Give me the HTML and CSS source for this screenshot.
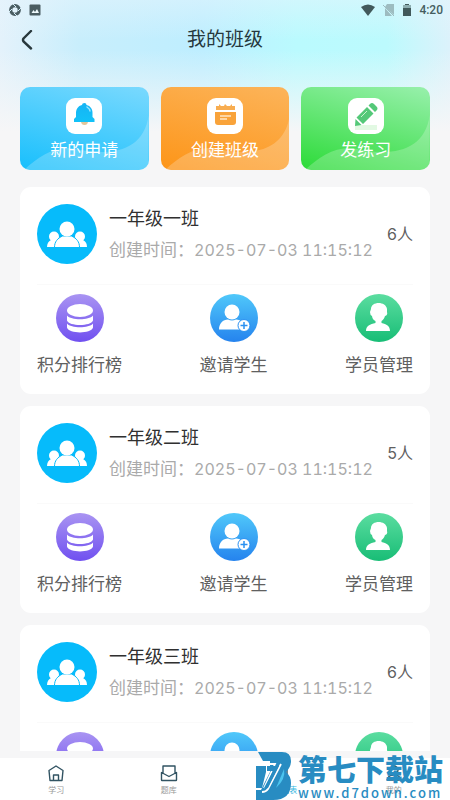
FILE: index.html
```html
<!DOCTYPE html>
<html lang="zh-CN">
<head>
<meta charset="utf-8">
<meta name="viewport" content="width=device-width, initial-scale=1">
<title>我的班级</title>
<link rel="stylesheet" href="styles.css">
</head>
<body>
<svg class="defs" aria-hidden="true">
  <defs>
    <linearGradient id="purple" x2="0" y2="1"><stop stop-color="#a994f2"/><stop offset="1" stop-color="#7050f0"/></linearGradient>
    <linearGradient id="blue" x2="0" y2="1"><stop stop-color="#50c8fa"/><stop offset="1" stop-color="#2583ee"/></linearGradient>
    <linearGradient id="green" x2="0" y2="1"><stop stop-color="#5bdda0"/><stop offset="1" stop-color="#18bd76"/></linearGradient>
    <linearGradient id="bell" x2="0" y2="1"><stop stop-color="#16b4f4"/><stop offset="1" stop-color="#12c2f8"/></linearGradient>
    <symbol id="people" viewBox="0 0 60 60">
      <circle cx="30" cy="30" r="30" fill="#06bbfb"/>
      <g fill="#fff">
        <circle cx="17" cy="32.500" r="5"/><path d="M10 43q0-5 4-7h6l2 7z"/>
        <circle cx="43" cy="32.500" r="5"/><path d="M50 43q0-5-4-7h-6l-2 7z"/>
        <path d="M17.500 43.500c0-6 3-9 8-11.500h9c5 2.500 8 5.500 8 11.500z" stroke="#06bbfb"/>
        <circle cx="30" cy="25" r="7.500"/>
        <path d="M18 42.500h24v.5H18z"/>
      </g>
      <path d="M8 43.200h44v2H8z" fill="#06bbfb"/>
    </symbol>
    <symbol id="rank" viewBox="0 0 48 48">
      <circle cx="24" cy="24" r="24" fill="url(#purple)"/>
      <g fill="#fff"><ellipse cx="24" cy="16.500" rx="13" ry="6.500"/><path d="M11 21.500c4 5 22 5 26 0v5c-2 6-24 6-26 0zM11 29.500c4 5 22 5 26 0v4c-2 6.500-24 6.500-26 0z"/></g>
    </symbol>
    <symbol id="invite" viewBox="0 0 48 48">
      <circle cx="24" cy="24" r="24" fill="url(#blue)"/>
      <circle cx="22" cy="18" r="7.500" fill="#fff"/><path d="M9 35.500c0-6 4-10 9-10q4 2 8 0c5 0 9 4 9 10z" fill="#fff"/>
      <circle cx="34" cy="31.500" r="6" fill="#fff" stroke="#2b91f1"/><path d="M30.500 31.500h7M34 28v7" stroke="#2b91f1" stroke-width="1.500"/>
    </symbol>
    <symbol id="manage" viewBox="0 0 48 48">
      <circle cx="24" cy="24" r="24" fill="url(#green)"/>
      <path d="M16 15c0-8 15-8 16 0v3q1 3-2 4c-1 3-2 4-3.500 5v2c5 1 8.500 3 8.500 8H11c0-5 4-7 9.500-8v-2c-2-1-3-2-3.500-5q-2-1-2-4z" fill="#fff"/>
    </symbol>
  </defs>
</svg>
<div class="app">
  <header class="top">
    <div class="status">
      <svg width="12" height="12" viewBox="0 0 12 12"><circle cx="6" cy="6" r="4.300" fill="none" stroke="#4a5d62" stroke-width="3.200"/><path d="M4 0l3 3M12 4L9 7M8 12L5 9M0 8l3-3" stroke="#d5eff9" stroke-width="1"/></svg>
      <svg width="12" height="12" viewBox="0 0 12 12"><rect x="0.500" y="0.500" width="11" height="11" rx="1" fill="#4a5d62"/><path d="M2.500 9l2-3 1.500 2 2-3 2 4z" fill="#eef9fc"/></svg>
      <span class="spring"></span>
      <svg width="14" height="12" viewBox="0 0 14 12"><path d="M0 3q7-5 14 0L7 12z" fill="#41595b"/></svg>
      <svg width="12" height="12" viewBox="0 0 12 12"><path d="M4 0h7v11L2 3zM2 4l7 8H2z" fill="#9dbcc0"/><path d="M0 1l11 11" stroke="#9dbcc0"/></svg>
      <svg width="8" height="12" viewBox="0 0 8 12"><path d="M2 0h4v1h2v11H0V1h2z" fill="#41595b"/><path d="M0 1h8v3H0z" fill="#8eaeb1"/></svg>
      <time>4:20</time>
    </div>
    <div class="titlebar">
      <button class="back" aria-label="返回"><svg width="12" height="20" viewBox="0 0 12 20"><path d="M10 1L2.500 8.500q-1 1.500 0 3L10 18.500" fill="none" stroke="#28383d" stroke-width="2.400" stroke-linecap="round"/></svg></button>
      <h1>我的班级</h1>
    </div>
  </header>
  <main>
    <div class="shortcuts">
      <button class="shortcut apply">
        <svg class="swoosh" viewBox="0 0 129 83" preserveAspectRatio="none"><path d="M4 83C18 70 32 60 52 61C88 70 124 66 129 28V83z"/></svg>
        <svg class="tile" viewBox="0 0 36 36"><rect width="36" height="36" rx="9" fill="#fff"/><path d="M15 23a3.500 4 0 0 0 7 0z" fill="#e2c69a"/><path d="M18.500 5q2 0 2 2c4 1 6 4 6 8v4l2 2v3H8v-3l2-2v-4c0-4 2-7 6-8q0-2 2.500-2z" fill="url(#bell)"/><path d="M21 9q3 2 3 4" fill="none" stroke="#9ae5ff" stroke-width="1.500" stroke-linecap="round"/></svg>
        <span>新的申请</span>
      </button>
      <button class="shortcut create">
        <svg class="swoosh" viewBox="0 0 129 83" preserveAspectRatio="none"><path d="M4 83C18 70 32 60 52 61C88 70 124 66 129 28V83z"/></svg>
        <svg class="tile" viewBox="0 0 36 36"><rect width="36" height="36" rx="9" fill="#fff"/><path d="M9 12V8h3V6l2 2h3l1-2 2 2h3l2-2v2h3v4z" fill="#f8ad50"/><path d="M8 14h21v10q0 3-3 3H11q-3 0-3-3z" fill="#f9a33a"/><path d="M13 18h11M13 21h7" stroke="#ffe8c6" stroke-width="1.500"/></svg>
        <span>创建班级</span>
      </button>
      <button class="shortcut practice">
        <svg class="swoosh" viewBox="0 0 129 83" preserveAspectRatio="none"><path d="M4 83C18 70 32 60 52 61C88 70 124 66 129 28V83z"/></svg>
        <svg class="tile" viewBox="0 0 36 36"><rect width="36" height="36" rx="9" fill="#fff"/><path d="M7 27h22v5H7z" fill="#e2f9e3"/><g fill="#54c878"><path d="M20.500 7.500l1.500-1.500q2-2 4 0l2.500 2.500q2 2 0 4L27 14zM19 9l6.500 6.500L15 26l-6.500-6.500zM7.500 21l6 6-6.500 1z"/></g><path d="M13 19l6-6" stroke="#c8f4cf"/></svg>
        <span>发练习</span>
      </button>
    </div>
    <article class="card">
      <div class="summary">
        <svg class="avatar"><use href="#people"/></svg>
        <div class="info"><h2>一年级一班</h2><p>创建时间：<time>2025-07-03 11:15:12</time></p></div>
        <span class="count">6人</span>
      </div>
      <div class="actions">
        <button><svg><use href="#rank"/></svg>积分排行榜</button>
        <button><svg><use href="#invite"/></svg>邀请学生</button>
        <button><svg><use href="#manage"/></svg>学员管理</button>
      </div>
    </article>
    <article class="card">
      <div class="summary">
        <svg class="avatar"><use href="#people"/></svg>
        <div class="info"><h2>一年级二班</h2><p>创建时间：<time>2025-07-03 11:15:12</time></p></div>
        <span class="count">5人</span>
      </div>
      <div class="actions">
        <button><svg><use href="#rank"/></svg>积分排行榜</button>
        <button><svg><use href="#invite"/></svg>邀请学生</button>
        <button><svg><use href="#manage"/></svg>学员管理</button>
      </div>
    </article>
    <article class="card">
      <div class="summary">
        <svg class="avatar"><use href="#people"/></svg>
        <div class="info"><h2>一年级三班</h2><p>创建时间：<time>2025-07-03 11:15:12</time></p></div>
        <span class="count">6人</span>
      </div>
      <div class="actions">
        <button><svg><use href="#rank"/></svg>积分排行榜</button>
        <button><svg><use href="#invite"/></svg>邀请学生</button>
        <button><svg><use href="#manage"/></svg>学员管理</button>
      </div>
    </article>
  </main>
  <nav class="tabs">
    <a href="#study"><svg viewBox="0 0 18 18"><path d="M2 6.500L9 2l7 4.500L15 16.500H3zM6.500 16v-5h5v5"/></svg>学习</a>
    <a href="#bank"><svg viewBox="0 0 18 18"><path d="M3 9V2h12v7M1.500 8.500V16q0 .500.500.500h14q.500 0 .500-.500V8.500L9 12.500z"/></svg>题库</a>
    <a href="#class" class="active"><svg viewBox="0 0 18 18"><path d="M3 2h12v14H3zM6 6h6M6 10h6"/></svg>班级列表</a>
    <a href="#me"><svg viewBox="0 0 18 18"><circle cx="9" cy="6" r="4"/><path d="M2 16q1-5 7-5t7 5z"/></svg>我的</a>
  </nav>
  <div class="watermark">
    <svg width="35" height="48" viewBox="0 0 35 48"><path d="M2 0h24q9 0 9 9 0 6-5 11 5 4 5 11 0 17-18 17H0V38h5L14 20V9H7z" fill="#288cc2"/><path d="M0 14h10v6l-4 16H0z" fill="#288cc2"/><path d="M25 12L12 37q-2 3-6 3M9 12h10L8 36" fill="none" stroke="#fff" stroke-width="1.800"/><path d="M11 14h12L12 36H8L17 19h-6z" fill="#288cc2"/><path d="M28 17q2 10-8 19z" fill="#4cc4ee"/></svg>
    <div class="brand"><strong>第七下载站</strong><span>www.d7down.com</span></div>
  </div>
</div>
</body>
</html>
```

FILE: styles.css
```css
* { box-sizing: border-box; }
body { margin: 0; background: #f6f6f7; color: #303030; font-family: Inter, "Noto Sans CJK SC", sans-serif; }
h1, h2, p { margin: 0; font-weight: 400; }
button { border: 0; padding: 0; background: none; font: inherit; color: inherit; cursor: pointer; }
svg { display: block; flex: none; }
.defs { position: absolute; width: 0; height: 0; }
.app {
  position: relative; height: 100vh; overflow: hidden; display: flex; flex-direction: column;
  background:
    linear-gradient(to bottom, rgba(246, 246, 247, 0) 50px, #f6f6f7 132px) 0 0 / 100% 132px no-repeat,
    linear-gradient(to right, #e4f2fb 0, #c8eefc 18%, #beeeff 45%, #bafafe 66%, #bcfafd 86%, #dcf2fb 100%) 0 0 / 100% 132px no-repeat,
    #f6f6f7;
}
.top { background: linear-gradient(to bottom, rgba(230, 244, 252, .5), rgba(230, 244, 252, 0) 40px); }
.status { height: 20px; padding: 0 7px 0 9px; display: flex; align-items: center; gap: 8px; }
.status time { font: 500 12px/20px Roboto, sans-serif; color: #455e60; }
.spring { flex: 1; }
.titlebar { height: 40px; display: grid; grid-template-columns: 54px 1fr 54px; align-items: center; }
.back { height: 40px; padding-left: 21px; }
.titlebar h1 { text-align: center; font-size: 19px; line-height: 28px; color: #26383d; }
main { flex: 1; min-height: 0; overflow: hidden; margin: 27px 20px 7px; display: flex; flex-direction: column; gap: 12px; }
.shortcuts { flex: none; display: grid; grid-template-columns: repeat(3, 1fr); gap: 12px; margin-bottom: 5px; }
.shortcut { position: relative; overflow: hidden; height: 83px; padding-top: 11px; border-radius: 10px; display: flex; flex-direction: column; align-items: center; gap: 4px; color: #fff; font-size: 17px; line-height: 24px; }
.shortcut span, .tile { position: relative; }
.tile { width: 36px; height: 36px; }
.swoosh { position: absolute; inset: 0; width: 100%; height: 100%; fill: rgba(255, 255, 255, .22); }
.apply { background: linear-gradient(195deg, #7ad9fe, #18bffc); }
.create { background: linear-gradient(195deg, #fcb45a, #fd9518); }
.practice { background: linear-gradient(195deg, #98f0ac, #2cdb38); }
.card { flex: none; padding: 17px; border-radius: 11px; background: #fff; }
.summary { display: flex; align-items: flex-start; gap: 12px; padding-bottom: 18px; border-bottom: 1px solid #fafafa; }
.avatar { width: 60px; height: 60px; }
.info { flex: 1; min-width: 0; white-space: nowrap; }
.info h2 { font-size: 18px; line-height: 30px; }
.info p { font-size: 17px; line-height: 32px; color: #aaa; }
.info time { font-size: 16px; font-variant-numeric: tabular-nums; }
.count { font-size: 16px; line-height: 60px; color: #606060; white-space: nowrap; }
.actions { display: flex; justify-content: space-between; padding-top: 9px; }
.actions button { display: flex; flex-direction: column; align-items: center; gap: 11px; color: #606060; font-size: 17px; line-height: 24px; }
.actions svg { width: 48px; height: 48px; }
.tabs { height: 42px; flex: none; display: grid; grid-template-columns: repeat(4, 1fr); background: #fff; }
.tabs a { display: flex; flex-direction: column; align-items: center; padding-top: 6px; gap: 2px; color: #999; font-size: 8px; line-height: 12px; text-decoration: none; }
.tabs svg { width: 18px; height: 18px; fill: none; stroke: #315362; stroke-width: 1.400; stroke-linejoin: round; }
.tabs .active { color: #36b8df; }
.watermark { position: absolute; right: 7px; bottom: 0; display: flex; gap: 7px; color: #288cc2; pointer-events: none; }
.brand { display: flex; flex-direction: column; }
.brand strong { font: 900 29px/33px "Noto Sans CJK SC", sans-serif; }
.brand span { font: 500 13px/15px "Noto Sans CJK SC", sans-serif; letter-spacing: 2px; }
```
